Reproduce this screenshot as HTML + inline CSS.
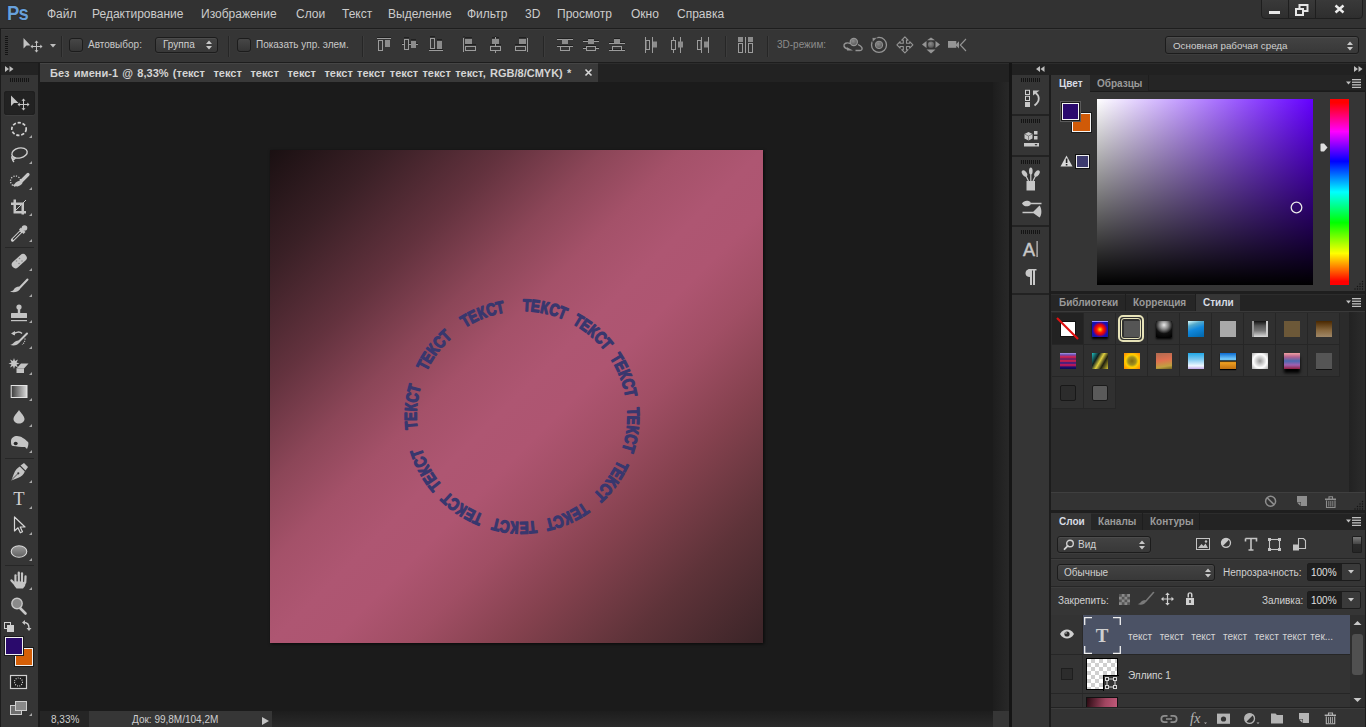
<!DOCTYPE html>
<html><head><meta charset="utf-8">
<style>
*{margin:0;padding:0;box-sizing:border-box}
html,body{width:1366px;height:727px;overflow:hidden;background:#1b1b1b;font-family:"Liberation Sans",sans-serif;position:relative}
.a{position:absolute}
.t{position:absolute;white-space:nowrap;color:#c8c8c8;font-size:10px;line-height:12px}
.m{position:absolute;white-space:nowrap;color:#cccccc;font-size:12px;line-height:14px;top:7px}
svg{position:absolute;overflow:visible}
.sep{position:absolute;top:36px;width:1px;height:21px;background:#262626;box-shadow:1px 0 0 #3c3c3c}
.chk{position:absolute;top:38px;width:14px;height:14px;border:1px solid #1c1c1c;border-radius:3px;background:linear-gradient(#474747,#353535);box-shadow:0 1px 0 #3c3c3c}
.dd{position:absolute;border:1px solid #1c1c1c;border-radius:3px;background:linear-gradient(#434343,#383838);box-shadow:inset 0 1px 0 #4c4c4c,0 1px 0 #3c3c3c}
</style></head><body>
<!-- MENU BAR -->
<div class="a" style="left:0;top:0;width:1366px;height:28px;background:#323232"></div>
<div class="a" style="left:0;top:28px;width:1366px;height:1px;background:#1e1e1e"></div>
<div class="a" style="left:7px;top:1.5px;font:bold 18.5px/20px 'Liberation Sans',sans-serif;color:#68a0da;letter-spacing:-0.8px;transform:scaleY(1.14);transform-origin:0 0;text-shadow:0 0 1px #151515">Ps</div>
<div class="m" style="left:47px">Файл</div>
<div class="m" style="left:92px">Редактирование</div>
<div class="m" style="left:201px">Изображение</div>
<div class="m" style="left:296px">Слои</div>
<div class="m" style="left:342px">Текст</div>
<div class="m" style="left:388px">Выделение</div>
<div class="m" style="left:467px">Фильтр</div>
<div class="m" style="left:525px">3D</div>
<div class="m" style="left:557px">Просмотр</div>
<div class="m" style="left:631px">Окно</div>
<div class="m" style="left:677px">Справка</div>
<!-- window controls -->
<div class="a" style="left:1261px;top:-2px;width:102px;height:21px;border:1px solid #1e1e1e;border-radius:0 0 4px 4px;background:linear-gradient(#3a3a3a,#2e2e2e)"></div>
<div class="a" style="left:1288px;top:0;width:1px;height:18px;background:#1e1e1e"></div>
<div class="a" style="left:1315px;top:0;width:1px;height:18px;background:#1e1e1e"></div>
<div class="a" style="left:1269px;top:11px;width:11px;height:3px;background:#e6e6e6"></div>
<svg style="left:1295px;top:4px" width="14" height="12"><rect x="4.5" y="1" width="8" height="6" fill="none" stroke="#e6e6e6" stroke-width="2"/><rect x="1" y="5" width="7" height="6" fill="#323232" stroke="#e6e6e6" stroke-width="2"/></svg>
<svg style="left:1334px;top:4px" width="11" height="10"><path d="M1.5 1.5L9.5 8.5M9.5 1.5L1.5 8.5" stroke="#ececec" stroke-width="2.4"/></svg>

<!-- OPTIONS BAR -->
<div class="a" style="left:0;top:29px;width:1366px;height:33px;background:#353535;box-shadow:inset 0 1px 0 #3c3c3c"></div>
<div class="a" style="left:0;top:62px;width:1366px;height:1px;background:#1d1d1d"></div>
<div class="a" style="left:0;top:29px;width:1px;height:33px;background:#1d1d1d"></div>
<div class="a" style="left:5px;top:36px;width:3px;height:20px;background:repeating-linear-gradient(#141414 0 1px,#353535 1px 2px)"></div>
<svg style="left:0;top:0" width="60" height="60"><path d="M23.5 38V48.5L26.5 45.5H30.5Z" fill="#c2c2c2"/>
<path d="M36.5 42v9M32 46.5h9" stroke="#c2c2c2" stroke-width="1"/>
<path d="M36.5 40.5l-2 2.2h4zM36.5 52.5l-2-2.2h4zM30.5 46.5l2.2-2v4zM42.5 46.5l-2.2-2v4z" fill="#c2c2c2"/></svg>
<svg style="left:50px;top:44px" width="6" height="4"><path d="M0 0h6L3 3.5Z" fill="#bdbdbd"/></svg>
<div class="sep" style="left:61px"></div>
<div class="chk" style="left:69px"></div>
<div class="t" style="left:88px;top:39px">Автовыбор:</div>
<div class="dd" style="left:155px;top:37px;width:63px;height:16px"></div>
<div class="t" style="left:163px;top:39px;color:#d0d0d0">Группа</div>
<svg style="left:206px;top:40px" width="6" height="10"><path d="M0 4L3 0.5L6 4ZM0 6L3 9.5L6 6Z" fill="#c8c8c8"/></svg>
<div class="sep" style="left:228px"></div>
<div class="chk" style="left:237px"></div>
<div class="t" style="left:256px;top:39px">Показать упр. элем.</div>
<div class="sep" style="left:362px"></div>
<!-- align icons -->
<svg style="left:0;top:0" width="770" height="60" fill="none" stroke="#9c9c9c" stroke-width="1">
<g stroke="#1c1c1c" opacity="0.8">
<path d="M377 37.5h14M378 38.5h5M385 38.5h5"/>
<path d="M404 37.5h5M411 39.5h5M402 43.5h2M409 43.5h2M416 43.5h2"/>
<path d="M430 36.5h5M437 39.5h5M429 49.5h14"/>
<path d="M465 37.5h7M465 44.5h11M463.5 36.5h1"/>
<path d="M492 37.5h7M490 44.5h11M495 36.5h1"/>
<path d="M519 37.5h7M515 44.5h11"/>
<path d="M557 38.5h16M557 45.5h16M562 38.5h6"/>
<path d="M583 40.5h5M594 40.5h5M583 47.5h3M596 47.5h3M588 38.5h6M586 45.5h10"/>
<path d="M614 38.5h6M609 42.5h16M609 49.5h16"/>
</g>
<path d="M377 38.5h14"/><rect x="378.5" y="40.5" width="4" height="10"/><rect x="385" y="40" width="5" height="7" fill="#8c8c8c" stroke="none"/>
<path d="M402 44.5h16"/><rect x="404.5" y="39.5" width="4" height="10" fill="#353535"/><rect x="411" y="41" width="5" height="7" fill="#8c8c8c" stroke="none"/>
<path d="M429 50.5h14"/><rect x="430.5" y="38.5" width="4" height="10"/><rect x="437" y="41" width="5" height="8" fill="#8c8c8c" stroke="none"/>
<path d="M463.5 38v14"/><rect x="465" y="39" width="7" height="5" fill="#8c8c8c" stroke="none"/><rect x="465.5" y="46.5" width="10" height="4"/>
<path d="M495.5 37v16"/><rect x="492" y="39" width="7" height="5" fill="#8c8c8c" stroke="none"/><rect x="490.5" y="46.5" width="10" height="4" fill="#353535"/>
<path d="M527.5 38v14"/><rect x="519" y="39" width="7" height="5" fill="#8c8c8c" stroke="none"/><rect x="515.5" y="46.5" width="10" height="4"/>
<path d="M557 39.5h16M557 46.5h16"/><rect x="562" y="39.5" width="6" height="4.5" fill="#8c8c8c" stroke="none"/><rect x="560.5" y="46.5" width="9" height="4"/>
<path d="M583 41.5h5M594 41.5h5M583 48.5h3M596 48.5h3"/><rect x="588" y="39" width="6" height="5" fill="#8c8c8c" stroke="none"/><rect x="586.5" y="46.5" width="9" height="4"/>
<path d="M609 43.5h16M609 50.5h16"/><rect x="614" y="39" width="6" height="4.5" fill="#8c8c8c" stroke="none"/><rect x="612.5" y="46.5" width="9" height="4"/>
<path d="M645.5 37v16M652.5 37v16"/><rect x="646" y="40.5" width="3.5" height="9"/><rect x="653" y="41.5" width="4" height="6" fill="#8c8c8c" stroke="none"/>
<path d="M673.5 37v16M680.5 37v16"/><rect x="671.5" y="40.5" width="4" height="9" fill="#353535"/><rect x="678" y="41.5" width="5" height="6" fill="#8c8c8c" stroke="none"/>
<path d="M701.5 37v16M708.5 37v16"/><rect x="697.5" y="40.5" width="3.5" height="9"/><rect x="704" y="41.5" width="4" height="6" fill="#8c8c8c" stroke="none"/>
<rect x="738" y="37" width="5" height="5" fill="#8c8c8c" stroke="none"/><rect x="748" y="37" width="5" height="5" fill="#8c8c8c" stroke="none"/>
<rect x="738.5" y="43.5" width="4" height="9"/><rect x="748.5" y="43.5" width="4" height="9"/><path d="M745.5 37v16"/>
</svg>
<div class="sep" style="left:543px"></div>
<div class="sep" style="left:725px"></div>
<div class="sep" style="left:767px"></div>
<div class="t" style="left:777px;top:39px;color:#8c8c8c">3D-режим:</div>
<svg style="left:0;top:0" width="980" height="60" fill="none" stroke="#959595" stroke-width="1.2">
<defs><radialGradient id="sph" cx="0.4" cy="0.35" r="0.7"><stop offset="0" stop-color="#8a8a8a"/><stop offset="1" stop-color="#555"/></radialGradient></defs>
<circle cx="853.8" cy="42" r="3.6" fill="url(#sph)"/>
<path d="M850.5 43.5c-4-1.5-7 0-6.5 2.5c0.3 1.5 2 2.5 4 3" stroke-width="1.4"/>
<path d="M847 47.2l6 3.3h-6Z" fill="#959595" stroke="none"/>
<path d="M855.5 50.5h4.5c2.5 0 3-2.5 0.5-4.5l-2.5-1.5" stroke-width="1.4"/>
<circle cx="879" cy="44.9" r="7.5" stroke-width="1.3"/>
<path d="M872 37.5l5.2 0.2-4.7 4.5Z" fill="#959595" stroke="#333" stroke-width="0.8"/>
<circle cx="879" cy="44.9" r="3.7" fill="url(#sph)" stroke-width="1"/>
<path d="M904.9 36.9 L908.1 40.1 L906.5 40.1 L906.5 43.3 L909.7 43.3 L909.7 41.7 L912.9 44.9 L909.7 48.1 L909.7 46.5 L906.5 46.5 L906.5 49.7 L908.1 49.7 L904.9 52.9 L901.7 49.7 L903.3 49.7 L903.3 46.5 L900.1 46.5 L900.1 48.1 L896.9 44.9 L900.1 41.7 L900.1 43.3 L903.3 43.3 L903.3 40.1 L901.7 40.1Z" stroke-width="1.1" stroke-linejoin="round"/>
<g fill="#959595" stroke="none"><path d="M931 37.5l4 2.8h-8Z"/><path d="M931 53.5l4.5-4h-9Z"/><path d="M922 44.5l4.5-3.5v7Z"/><path d="M940 44.5l-4.5-3.5v7Z"/></g>
<circle cx="931" cy="44.7" r="3.1" fill="url(#sph)" stroke="none"/>
<rect x="948" y="41" width="8.3" height="6.8" fill="#959595" stroke="none"/><path d="M956 44.3l3-3v7.3l-3-3Z" fill="#959595" stroke="none"/>
<path d="M966 39l-5.7 6 5.7 6" stroke-width="1.1"/>
</svg>
<div class="dd" style="left:1165px;top:36px;width:194px;height:18px"></div>
<div class="t" style="left:1173px;top:40px;color:#d0d0d0;font-size:9.8px">Основная рабочая среда</div>
<svg style="left:1347px;top:41px" width="6" height="10"><path d="M0 4L3 0.5L6 4ZM0 6L3 9.5L6 6Z" fill="#c8c8c8"/></svg>

<!-- LEFT TOOLBAR -->
<div class="a" style="left:0;top:63px;width:40px;height:664px;background:#1c1c1c"></div>
<div class="a" style="left:1px;top:63px;width:37px;height:12px;background:#232323"></div>
<svg style="left:5px;top:66px" width="9" height="6" fill="#bdbdbd"><path d="M0 0L4 3L0 6ZM4.5 0L8.5 3L4.5 6Z"/></svg>
<div class="a" style="left:1px;top:75px;width:37px;height:652px;background:#353535"></div>
<div class="a" style="left:10px;top:78px;width:19px;height:4px;background:repeating-linear-gradient(90deg,#141414 0 1px,#353535 1px 2px)"></div>
<div class="a" style="left:4px;top:91px;width:31px;height:24px;background:#222;border-radius:3px;box-shadow:inset 0 0 0 1px #1f1f1f, 0 1px 0 #3e3e3e"></div>
<svg style="left:0;top:0" width="40" height="727">
<g fill="#c4c4c4" stroke="none">
<!-- move -->
<path d="M11 95.5V106L14 103H18.5Z"/>
<path d="M23.5 100v9M19 104.5h9" stroke="#c4c4c4" stroke-width="1"/>
<path d="M23.5 98.5l-2 2.2h4zM23.5 110.5l-2-2.2h4zM17.5 104.5l2.2-2v4zM29.5 104.5l-2.2-2v4z"/>
<!-- marquee -->
<ellipse cx="19" cy="129" rx="7.2" ry="6.3" fill="none" stroke="#d4d4d4" stroke-width="1.7" stroke-dasharray="3.2 1.8"/>
<!-- lasso -->
<ellipse cx="19.5" cy="153" rx="7.8" ry="5" transform="rotate(-12 19.5 153)" fill="none" stroke="#d0d0d0" stroke-width="1.4"/>
<path d="M12 156c-1 3 1 4 2.5 3s0 -2 -1.5 -1c-1 1 0 3 1 4" fill="none" stroke="#d0d0d0" stroke-width="1.3"/>
<!-- quick select -->
<circle cx="15.5" cy="181" r="5" fill="none" stroke="#d0d0d0" stroke-width="1.3" stroke-dasharray="1.2 1.4"/>
<path d="M28 174.5L21 181.5" stroke="#c8c8c8" stroke-width="3.2" stroke-linecap="round"/><path d="M21.5 180.5c-3 0 -5.5 1.5 -7 3.5c-0.5 0.7 -1.5 1 -2.5 1.2c3.5 2 8.5 1.5 10.5-2.2Z"/>
<!-- crop -->
<path d="M13.5 199.5h2.5v11.5h10v2.5h-12.5ZM11 202.5h13v12h-2.5v-9.5h-10.5Z"/>
<path d="M16 210L26 200" stroke="#c4c4c4" stroke-width="1"/>
<!-- eyedropper -->
<path d="M12.5 240L21 231.5" stroke="#cfcfcf" stroke-width="3.2" stroke-linecap="round"/>
<path d="M13 239.5L20.5 232" stroke="#333" stroke-width="1.4"/>
<path d="M19 229.5L23.5 234l2-2l-4.5-4.5Z"/>
<circle cx="24.5" cy="228" r="2.8"/>
<!-- separator -->
<!-- healing -->
<rect x="10.5" y="257.5" width="17.5" height="7.5" rx="3.7" transform="rotate(-42 19.2 261.2)"/>
<g fill="#8a8a8a"><circle cx="16.5" cy="261" r="0.8"/><circle cx="19.5" cy="258.5" r="0.8"/><circle cx="19" cy="263.5" r="0.8"/><circle cx="22" cy="261" r="0.8"/></g>
<!-- brush -->
<path d="M27.5 279.5L19 288.5" stroke="#c8c8c8" stroke-width="2" stroke-linecap="round"/>
<path d="M19.5 286.5c-3 0 -5 1.5 -6 3.5c-1 1 -2.5 1.3 -3.5 1.5c3 1.5 8 1 10-2.5Z"/>
<!-- stamp -->
<circle cx="19" cy="307" r="2.6"/><rect x="17.8" y="308" width="2.4" height="5"/>
<rect x="11" y="313" width="16" height="5" rx="0.5"/><rect x="11" y="320" width="16" height="1.2"/>
<!-- history brush -->
<path d="M13 334.5c3-3 7-3 9-1" fill="none" stroke="#c8c8c8" stroke-width="1.5"/><path d="M11 333.5l4-2.5v4.5Z"/>
<path d="M27 333.5L18.5 342" stroke="#c8c8c8" stroke-width="2" stroke-linecap="round"/>
<path d="M19 340.5c-3 0 -5 1.5 -6 3c-1 1 -2 1.2 -3 1.3c3 1.5 7.5 1 9.5-2.5Z"/>
<path d="M25 338.5c0 3 -1 5 -3 6" fill="none" stroke="#d8d8d8" stroke-width="1.1" stroke-dasharray="1 1.2"/>
<!-- eraser -->
<path d="M14 358l1 3 3-1.5-1.5 3 3 1-3 1 1.5 3-3-1.5-1 3-1-3-3 1.5 1.5-3-3-1 3-1-1.5-3 3 1.5Z"/>
<path d="M16.5 368.5L21 363.5h7.5l-4.5 5v4.5h-7.5Z"/><path d="M24 368.5h-7.5" stroke="#888" stroke-width="0.6"/>
<!-- gradient -->
<defs><linearGradient id="gg"><stop offset="0" stop-color="#3a3a3a"/><stop offset="1" stop-color="#dcdcdc"/></linearGradient>
<linearGradient id="el" x1="0" y1="0" x2="0" y2="1"><stop offset="0" stop-color="#9a9a9a"/><stop offset="1" stop-color="#606060"/></linearGradient></defs>
<rect x="11.2" y="385.5" width="15.8" height="12" fill="url(#gg)" stroke="#e4e4e4" stroke-width="1"/>
<!-- blur -->
<path d="M19 410c-2 3 -5.5 6 -5.5 9c0 2.5 2.5 4.5 5.5 4.5s5.5-2 5.5-4.5c0-3 -3.5-6 -5.5-9Z"/>
<!-- dodge -->
<path d="M11 441c0-3 3-5 6-5c4 0 8 3 11 6c1 1 0 5 -1 7l-2 -2c-4 0 -9 -0.5 -12 -1c-2 0 -2 -3 -2 -5Z"/>
<ellipse cx="15.7" cy="443.5" rx="2" ry="1.8" fill="#2a2a2a"/>
<!-- pen -->
<path d="M20.5 465.5l3.5 -2.5 4 4 -2.5 3.5Z"/>
<path d="M19.8 466.5l5 5c-1 3 -3 5 -7 6.5l-6.5 2.5 2.5-6.5c1.5-4 3.5-6 6-7.5Z"/>
<path d="M11.5 480l6-6" stroke="#333" stroke-width="0.8"/><circle cx="18.3" cy="473.3" r="1.1" fill="#333"/>
<!-- type -->
<text x="19" y="505" font-family="Liberation Serif" font-size="18.5" text-anchor="middle" fill="#d0d0d0">T</text>
<!-- path select -->
<path d="M14.5 517v14l3.5-3.2 2.3 5 2.2-1-2.3-4.8h4.8Z" fill="none" stroke="#d6d6d6" stroke-width="1.2" stroke-linejoin="round"/>
<!-- ellipse -->
<ellipse cx="19" cy="551.5" rx="7.8" ry="5.8" fill="url(#el)" stroke="#d8d8d8" stroke-width="1.1"/>
<!-- hand -->
<path d="M14.5 581.5h11.5l-1 4.5-2 2.5h-6.5l-2-2.5Z"/><path d="M15.5 582v-6.5M18.8 582v-9.3M22 582v-8.5M25.2 582.5l0.3-6" stroke="#c4c4c4" stroke-width="2.3" stroke-linecap="round"/><path d="M16 585.5l-4.5-5" stroke="#c4c4c4" stroke-width="2.4" stroke-linecap="round"/><path d="M17.2 576v5M20.4 574v7M23.6 575v7" stroke="#353535" stroke-width="0.8"/>
<!-- zoom -->
<path d="M20 608L25.5 613.5" stroke="#c8c8c8" stroke-width="2.6" stroke-linecap="round"/>
<circle cx="17" cy="603.5" r="5.2" fill="#8a8a8a" stroke="#c8c8c8" stroke-width="1.4"/>
<!-- default colors -->
<rect x="4.5" y="622.5" width="6" height="6" fill="#333" stroke="#cfcfcf" stroke-width="1"/>
<rect x="7" y="625" width="7" height="7" fill="#cfcfcf"/>
<rect x="4.5" y="622.5" width="6" height="6" fill="none" stroke="#cfcfcf" stroke-width="1"/>
<rect x="5" y="623" width="5" height="2" fill="#333"/><rect x="5" y="623" width="2" height="5" fill="#333"/>
<!-- swap -->
<path d="M24 622.5c3 0 5 1.5 5 5.5" fill="none" stroke="#cfcfcf" stroke-width="1.3"/>
<path d="M22 622.5l3-2.5v5Z M29 631l-2.5-3h5Z"/>
<!-- small triangles -->
<g fill="#a8a8a8">
<path d="M32 135v3h-3Z"/><path d="M32 161v3h-3Z"/><path d="M32 187v3h-3Z"/><path d="M32 213v3h-3Z"/><path d="M32 239v3h-3Z"/>
<path d="M32 268v3h-3Z"/><path d="M32 294v3h-3Z"/><path d="M32 320v3h-3Z"/><path d="M32 346v3h-3Z"/><path d="M32 372v3h-3Z"/><path d="M32 398v3h-3Z"/><path d="M32 424v3h-3Z"/><path d="M32 450v3h-3Z"/>
<path d="M32 480v3h-3Z"/><path d="M32 506v3h-3Z"/><path d="M32 532v3h-3Z"/><path d="M32 558v3h-3Z"/>
<path d="M32 587v3h-3Z"/><path d="M32 713v3h-3Z"/>
</g>
</g>
<!-- separators -->
<rect x="5" y="247" width="29" height="1" fill="#262626"/>
<rect x="5" y="458" width="29" height="1" fill="#262626"/>
<rect x="5" y="565" width="29" height="1" fill="#262626"/>
<!-- fg/bg -->
<rect x="15.5" y="648.5" width="17" height="17" fill="#d45f08" stroke="#f0f0f0" stroke-width="1"/>
<rect x="14.5" y="647.5" width="19" height="19" fill="none" stroke="#1a1a1a" stroke-width="1"/>
<rect x="5.5" y="637.5" width="17" height="17" fill="#2a0a6c" stroke="#f0f0f0" stroke-width="1"/>
<rect x="4.5" y="636.5" width="19" height="19" fill="none" stroke="#1a1a1a" stroke-width="1"/>
<!-- quick mask -->
<rect x="10.5" y="675.5" width="16" height="13" fill="#202020" stroke="#d0d0d0" stroke-width="1.2"/>
<circle cx="18.5" cy="682" r="4" fill="none" stroke="#e0e0e0" stroke-width="1.1" stroke-dasharray="0.9 1.3"/>
<!-- screen mode -->
<rect x="10.5" y="705.5" width="11" height="9" fill="#6e6e6e" stroke="#cfcfcf" stroke-width="1"/>
<rect x="15.5" y="701.5" width="11" height="9" fill="#8a8a8a" stroke="#cfcfcf" stroke-width="1"/>
</svg>


<!-- DOC TAB BAR -->
<div class="a" style="left:40px;top:63px;width:969px;height:19px;background:#222222;box-shadow:inset 0 1px 0 #2c2c2c"></div>
<div class="a" style="left:40px;top:63px;width:558px;height:19px;background:#393939;box-shadow:inset 0 1px 0 #454545"></div>
<div class="a" style="left:50px;top:66px;font:bold 11px/14px 'Liberation Sans',sans-serif;color:#d4d4d4;white-space:pre;word-spacing:1.25px">Без имени-1 @ 8,33% (текст  текст  текст  текст  текст текст текст текст текст, RGB/8/CMYK) *</div>
<svg style="left:585px;top:69px" width="7" height="7"><path d="M0.5 0.5L6.5 6.5M6.5 0.5L0.5 6.5" stroke="#d8d8d8" stroke-width="1.6"/></svg>

<!-- DOCUMENT AREA -->
<div class="a" style="left:40px;top:82px;width:953px;height:629px;background:#1b1b1b"></div>
<div class="a" id="canvas" style="left:270px;top:150px;width:493px;height:493px;box-shadow:1px 1px 3px rgba(0,0,0,.7);background:linear-gradient(135deg,#1a1012 0%,#3a2026 12%,#63323e 24%,#8c4658 34%,#a45169 42%,#ae5672 50%,#ae5571 56%,#a04e64 64%,#84414e 74%,#5e3339 86%,#3a2427 100%)"></div>
<svg id="ring" style="left:270px;top:150px" width="493" height="493"><g fill="#38376e" stroke="#38376e" stroke-width="1.3" stroke-linejoin="round" font-family="Liberation Sans" font-weight="bold" font-size="17" text-anchor="middle"><text transform="translate(252,266.5) rotate(2.49) translate(0,-105.5) scale(0.8,1)">Т</text><text transform="translate(252,266.5) rotate(6.95) translate(0,-105.5) scale(0.8,1)">Е</text><text transform="translate(252,266.5) rotate(11.81) translate(0,-105.5) scale(0.8,1)">К</text><text transform="translate(252,266.5) rotate(16.85) translate(0,-105.5) scale(0.8,1)">С</text><text transform="translate(252,266.5) rotate(21.51) translate(0,-105.5) scale(0.8,1)">Т</text><text transform="translate(252,266.5) rotate(30.49) translate(0,-105.5) scale(0.8,1)">Т</text><text transform="translate(252,266.5) rotate(34.95) translate(0,-105.5) scale(0.8,1)">Е</text><text transform="translate(252,266.5) rotate(39.81) translate(0,-105.5) scale(0.8,1)">К</text><text transform="translate(252,266.5) rotate(44.85) translate(0,-105.5) scale(0.8,1)">С</text><text transform="translate(252,266.5) rotate(49.51) translate(0,-105.5) scale(0.8,1)">Т</text><text transform="translate(252,266.5) rotate(58.49) translate(0,-105.5) scale(0.8,1)">Т</text><text transform="translate(252,266.5) rotate(62.95) translate(0,-105.5) scale(0.8,1)">Е</text><text transform="translate(252,266.5) rotate(67.81) translate(0,-105.5) scale(0.8,1)">К</text><text transform="translate(252,266.5) rotate(72.85) translate(0,-105.5) scale(0.8,1)">С</text><text transform="translate(252,266.5) rotate(77.51) translate(0,-105.5) scale(0.8,1)">Т</text><text transform="translate(252,266.5) rotate(87.49) translate(0,-105.5) scale(0.8,1)">Т</text><text transform="translate(252,266.5) rotate(91.95) translate(0,-105.5) scale(0.8,1)">Е</text><text transform="translate(252,266.5) rotate(96.81) translate(0,-105.5) scale(0.8,1)">К</text><text transform="translate(252,266.5) rotate(101.85) translate(0,-105.5) scale(0.8,1)">С</text><text transform="translate(252,266.5) rotate(106.51) translate(0,-105.5) scale(0.8,1)">Т</text><text transform="translate(252,266.5) rotate(116.49) translate(0,-105.5) scale(0.8,1)">Т</text><text transform="translate(252,266.5) rotate(120.95) translate(0,-105.5) scale(0.8,1)">Е</text><text transform="translate(252,266.5) rotate(125.81) translate(0,-105.5) scale(0.8,1)">К</text><text transform="translate(252,266.5) rotate(130.85) translate(0,-105.5) scale(0.8,1)">С</text><text transform="translate(252,266.5) rotate(135.51) translate(0,-105.5) scale(0.8,1)">Т</text><text transform="translate(252,266.5) rotate(146.49) translate(0,-105.5) scale(0.8,1)">Т</text><text transform="translate(252,266.5) rotate(150.95) translate(0,-105.5) scale(0.8,1)">Е</text><text transform="translate(252,266.5) rotate(155.81) translate(0,-105.5) scale(0.8,1)">К</text><text transform="translate(252,266.5) rotate(160.85) translate(0,-105.5) scale(0.8,1)">С</text><text transform="translate(252,266.5) rotate(165.51) translate(0,-105.5) scale(0.8,1)">Т</text><text transform="translate(252,266.5) rotate(174.49) translate(0,-105.5) scale(0.8,1)">Т</text><text transform="translate(252,266.5) rotate(178.95) translate(0,-105.5) scale(0.8,1)">Е</text><text transform="translate(252,266.5) rotate(183.81) translate(0,-105.5) scale(0.8,1)">К</text><text transform="translate(252,266.5) rotate(188.85) translate(0,-105.5) scale(0.8,1)">С</text><text transform="translate(252,266.5) rotate(193.51) translate(0,-105.5) scale(0.8,1)">Т</text><text transform="translate(252,266.5) rotate(203.49) translate(0,-105.5) scale(0.8,1)">Т</text><text transform="translate(252,266.5) rotate(207.95) translate(0,-105.5) scale(0.8,1)">Е</text><text transform="translate(252,266.5) rotate(212.81) translate(0,-105.5) scale(0.8,1)">К</text><text transform="translate(252,266.5) rotate(217.85) translate(0,-105.5) scale(0.8,1)">С</text><text transform="translate(252,266.5) rotate(222.51) translate(0,-105.5) scale(0.8,1)">Т</text><text transform="translate(252,266.5) rotate(231.49) translate(0,-105.5) scale(0.8,1)">Т</text><text transform="translate(252,266.5) rotate(235.95) translate(0,-105.5) scale(0.8,1)">Е</text><text transform="translate(252,266.5) rotate(240.81) translate(0,-105.5) scale(0.8,1)">К</text><text transform="translate(252,266.5) rotate(245.85) translate(0,-105.5) scale(0.8,1)">С</text><text transform="translate(252,266.5) rotate(250.51) translate(0,-105.5) scale(0.8,1)">Т</text><text transform="translate(252,266.5) rotate(265.49) translate(0,-105.5) scale(0.8,1)">Т</text><text transform="translate(252,266.5) rotate(269.95) translate(0,-105.5) scale(0.8,1)">Е</text><text transform="translate(252,266.5) rotate(274.81) translate(0,-105.5) scale(0.8,1)">К</text><text transform="translate(252,266.5) rotate(279.85) translate(0,-105.5) scale(0.8,1)">С</text><text transform="translate(252,266.5) rotate(284.51) translate(0,-105.5) scale(0.8,1)">Т</text><text transform="translate(252,266.5) rotate(297.49) translate(0,-105.5) scale(0.8,1)">Т</text><text transform="translate(252,266.5) rotate(301.95) translate(0,-105.5) scale(0.8,1)">Е</text><text transform="translate(252,266.5) rotate(306.81) translate(0,-105.5) scale(0.8,1)">К</text><text transform="translate(252,266.5) rotate(311.85) translate(0,-105.5) scale(0.8,1)">С</text><text transform="translate(252,266.5) rotate(316.51) translate(0,-105.5) scale(0.8,1)">Т</text><text transform="translate(252,266.5) rotate(329.49) translate(0,-105.5) scale(0.8,1)">Т</text><text transform="translate(252,266.5) rotate(333.95) translate(0,-105.5) scale(0.8,1)">Е</text><text transform="translate(252,266.5) rotate(338.81) translate(0,-105.5) scale(0.8,1)">К</text><text transform="translate(252,266.5) rotate(343.85) translate(0,-105.5) scale(0.8,1)">С</text><text transform="translate(252,266.5) rotate(348.51) translate(0,-105.5) scale(0.8,1)">Т</text></g></svg>
<!-- scrollbars / status -->
<div class="a" style="left:993px;top:82px;width:16px;height:629px;background:linear-gradient(90deg,#1d1d1d,#282828)"></div>
<div class="a" style="left:272px;top:711px;width:721px;height:16px;background:linear-gradient(#1d1d1d,#2a2a2a)"></div>
<div class="a" style="left:993px;top:711px;width:16px;height:16px;background:#363636"></div>
<div class="a" style="left:40px;top:711px;width:49px;height:16px;background:#252525"></div>
<div class="a" style="left:89px;top:711px;width:183px;height:16px;background:#363636"></div>
<div class="t" style="left:51px;top:714px;color:#cfcfcf">8,33%</div>
<div class="t" style="left:132px;top:714px;color:#cfcfcf">Док: 99,8M/104,2M</div>
<svg style="left:262px;top:717px" width="7" height="8"><path d="M0 0L7 4L0 8Z" fill="#c4c4c4"/></svg>

<!-- PANEL DOCK -->
<div class="a" style="left:1009px;top:63px;width:3px;height:664px;background:#151515"></div>
<div class="a" style="left:1012px;top:63px;width:354px;height:12px;background:#212121;box-shadow:inset 0 1px 0 #2c2c2c"></div>
<!-- header arrows -->
<svg style="left:1036px;top:66px" width="9" height="6" fill="#bdbdbd"><path d="M4 0L0 3L4 6ZM8.5 0L4.5 3L8.5 6Z"/></svg>
<svg style="left:1354px;top:66px" width="9" height="6" fill="#bdbdbd"><path d="M0 0L4 3L0 6ZM4.5 0L8.5 3L4.5 6Z"/></svg>
<!-- STRIP -->
<div class="a" style="left:1012px;top:75px;width:37px;height:652px;background:#353535"></div>
<div class="a" style="left:1012px;top:114px;width:37px;height:2px;background:#222"></div>
<div class="a" style="left:1012px;top:155px;width:37px;height:2px;background:#222"></div>
<div class="a" style="left:1012px;top:225px;width:37px;height:2px;background:#222"></div>
<div class="a" style="left:1012px;top:293px;width:37px;height:2px;background:#222"></div>
<div class="a" style="left:1021px;top:78px;width:19px;height:4px;background:repeating-linear-gradient(90deg,#141414 0 1px,#353535 1px 2px)"></div>
<div class="a" style="left:1021px;top:119px;width:19px;height:4px;background:repeating-linear-gradient(90deg,#141414 0 1px,#353535 1px 2px)"></div>
<div class="a" style="left:1021px;top:160px;width:19px;height:4px;background:repeating-linear-gradient(90deg,#141414 0 1px,#353535 1px 2px)"></div>
<div class="a" style="left:1021px;top:230px;width:19px;height:4px;background:repeating-linear-gradient(90deg,#141414 0 1px,#353535 1px 2px)"></div>
<svg style="left:1011px;top:75px" width="38" height="220">
<g fill="#c8c8c8">
<!-- history -->
<rect x="14.5" y="15.3" width="4" height="4.2" fill="none" stroke="#d0d0d0"/><rect x="14.5" y="21.3" width="4" height="4.2" fill="none" stroke="#d0d0d0"/><rect x="14" y="27" width="5" height="5"/>
<path d="M22 15.5h6.5l-6.5 5Z"/>
<path d="M24.5 18c4 2.5 5 8 -1 12.5" fill="none" stroke="#c8c8c8" stroke-width="1.8"/>
<!-- 3d/props -->
<g transform="translate(2,3)"><path d="M15.5 54l4 2v4.5l-4 2-4-2v-4.5Z" fill="#c8c8c8"/><path d="M11.5 56l4 2 4-2M15.5 58v4.5" stroke="#555" stroke-width="0.6" fill="none"/>
<rect x="21" y="53" width="3.5" height="3.5"/><rect x="21" y="58" width="3.5" height="3.5"/>
<rect x="11" y="65" width="15" height="3.5"/><path d="M21.5 66h3l-1.5 1.8Z" fill="#333"/></g>
<!-- brushes -->
<path d="M15.5 106h8.5v9.5h-8.5Z"/><path d="M17.5 106L14.5 100M19.8 106V97M22 106L25 100" stroke="#c8c8c8" stroke-width="1.2"/>
<ellipse cx="13.5" cy="98.5" rx="2.2" ry="3.6" transform="rotate(-35 13.5 98.5)"/><ellipse cx="19.8" cy="96" rx="1.8" ry="3.5"/><ellipse cx="26" cy="98.5" rx="2.2" ry="3.6" transform="rotate(35 26 98.5)"/>
<!-- brush presets -->
<path d="M19 128.5h11.5M11.5 137.5h11" stroke="#c8c8c8" stroke-width="1.7"/>
<path d="M11 128.5c2-3.5 6-3.5 8.5-1.5v3c-2.5 2-6.5 2-8.5-1.5Z"/><path d="M21.5 137.5L28.5 130.5c2.5 3 2.5 9.5 0 12Z"/>
<!-- character -->
<text x="12" y="181.3" font-family="Liberation Sans" font-size="18" fill="#c8c8c8" stroke="#c8c8c8" stroke-width="0.5">A</text><rect x="25.5" y="166" width="1.2" height="16"/>
<!-- paragraph -->
<path d="M17 194h8.5v1.5h-1.5v14.5h-2v-14.5h-1v14.5h-2v-8c-3 0 -4.5-1.5-4.5-3.8s1.5-3.7 3-3.7Z"/>
</g></svg>
<!-- sep between strip and panels -->
<div class="a" style="left:1049px;top:75px;width:2px;height:652px;background:#1c1c1c"></div>
<div class="a" style="left:1365px;top:75px;width:1px;height:652px;background:#1c1c1c"></div>

<!-- COLOR PANEL -->
<div class="a" style="left:1051px;top:75px;width:314px;height:16px;background:#252525;box-shadow:inset 0 -1px 0 #1e1e1e"></div>
<div class="a" style="left:1051px;top:75px;width:39px;height:17px;background:#353535"></div>
<div class="a" style="left:1090px;top:75px;width:59px;height:16px;background:#262626;border-right:1px solid #1e1e1e"></div>
<div class="t" style="left:1059px;top:78px;font-weight:bold;font-size:10px;color:#d8dce4">Цвет</div>
<div class="t" style="left:1097px;top:78px;font-weight:bold;font-size:10px;color:#9a9a9a">Образцы</div>
<svg style="left:1346px;top:79px" width="16" height="9" fill="#c0c0c0"><path d="M0 2.5h5L2.5 5.5Z"/><rect x="6" y="0" width="9" height="1.3"/><rect x="6" y="2.6" width="9" height="1.3"/><rect x="6" y="5.2" width="9" height="1.3"/><rect x="6" y="7.8" width="9" height="1.2"/></svg>
<div class="a" style="left:1051px;top:92px;width:314px;height:199px;background:#353535"></div>
<!-- fg/bg -->
<div class="a" style="left:1072px;top:113px;width:19px;height:19px;background:#d05a08;border:1px solid #f4f4f4;box-shadow:0 0 0 1px #1a1a1a"></div>
<div class="a" style="left:1060px;top:101px;width:21px;height:21px;background:#1a1a1a;border:1px solid #5a5a5a"></div>
<div class="a" style="left:1062px;top:103px;width:17px;height:17px;background:#2b0a6e;border:1px solid #f4f4f4"></div>
<svg style="left:1060px;top:155px" width="13" height="12"><path d="M6.5 0.5L12.5 11.5H0.5Z" fill="#d8d8d8"/><rect x="5.8" y="3.5" width="1.6" height="4.5" fill="#222"/><rect x="5.8" y="9" width="1.6" height="1.5" fill="#222"/></svg>
<div class="a" style="left:1076px;top:155px;width:13px;height:13px;background:#3d3b6e;border:1px solid #f0f0f0;box-shadow:0 0 0 1px #111"></div>
<!-- field -->
<div class="a" style="left:1097px;top:99px;width:216px;height:186px;background:linear-gradient(to top,#000,rgba(0,0,0,0)),linear-gradient(to right,#fff,#6400ff)"></div>
<svg style="left:1290px;top:201px" width="13" height="13"><circle cx="6.5" cy="6.5" r="5.3" fill="none" stroke="#e8e8e8" stroke-width="1.3"/></svg>
<div class="a" style="left:1330px;top:99px;width:19px;height:186px;background:linear-gradient(#f00 0%,#f00 2%,#f0f 17.5%,#00f 33.5%,#0ff 50%,#0f0 66.5%,#ff0 83%,#f00 98%,#f00 100%)"></div>
<svg style="left:1320px;top:143px" width="8" height="9"><path d="M1.5 0.5h2.5L7.5 4.5L4 8.5H1.5Q0.5 8.5 0.5 7.5V1.5Q0.5 0.5 1.5 0.5Z" fill="#e0e0e0"/></svg>
<svg style="left:1354px;top:280px" width="10" height="10" fill="#141414"><circle cx="8.5" cy="1.5" r="0.7"/><circle cx="8.5" cy="4" r="0.7"/><circle cx="6" cy="4" r="0.7"/><circle cx="8.5" cy="6.5" r="0.7"/><circle cx="6" cy="6.5" r="0.7"/><circle cx="3.5" cy="6.5" r="0.7"/><circle cx="8.5" cy="9" r="0.7"/><circle cx="6" cy="9" r="0.7"/><circle cx="3.5" cy="9" r="0.7"/><circle cx="1" cy="9" r="0.7"/></svg>
<div class="a" style="left:1051px;top:291px;width:314px;height:3px;background:#1e1e1e"></div>

<!-- STYLES PANEL -->
<div class="a" style="left:1051px;top:294px;width:314px;height:17px;background:#232323;box-shadow:inset 0 1px 0 #2c2c2c"></div>
<div class="a" style="left:1051px;top:294px;width:75px;height:17px;background:#262626;border-right:1px solid #1e1e1e;box-shadow:inset 0 1px 0 #2e2e2e"></div>
<div class="a" style="left:1126px;top:294px;width:70px;height:17px;background:#262626;border-right:1px solid #1e1e1e;box-shadow:inset 0 1px 0 #2e2e2e"></div>
<div class="a" style="left:1196px;top:294px;width:44px;height:18px;background:#353535"></div>
<div class="t" style="left:1059px;top:297px;font-weight:bold;font-size:10px;color:#9a9a9a">Библиотеки</div>
<div class="t" style="left:1133px;top:297px;font-weight:bold;font-size:10px;color:#9a9a9a">Коррекция</div>
<div class="t" style="left:1203px;top:297px;font-weight:bold;font-size:10px;color:#d8dce4">Стили</div>
<svg style="left:1346px;top:298px" width="16" height="9" fill="#c0c0c0"><path d="M0 2.5h5L2.5 5.5Z"/><rect x="6" y="0" width="9" height="1.3"/><rect x="6" y="2.6" width="9" height="1.3"/><rect x="6" y="5.2" width="9" height="1.3"/><rect x="6" y="7.8" width="9" height="1.2"/></svg>
<div class="a" style="left:1051px;top:311px;width:314px;height:181px;background:#2b2b2b;box-shadow:inset 0 1px 0 #3a3a3a"></div>
<div class="a" style="left:1349px;top:312px;width:16px;height:180px;background:linear-gradient(90deg,#222,#2c2c2c)"></div>
<div class="a" style="left:1052px;top:313px;width:32px;height:32px;background:#222;border-right:1px solid #262626;border-bottom:1px solid #262626"></div>
<div class="a" style="left:1060px;top:321px;width:16px;height:16px;background:#fff;border:1px solid #111"></div>
<div class="a" style="left:1084px;top:313px;width:32px;height:32px;background:#303030;border-right:1px solid #262626;border-bottom:1px solid #262626"></div>
<div class="a" style="left:1092px;top:321px;width:16px;height:16px;background:radial-gradient(circle at 50% 50%,#ffe000 0,#ff2000 28%,#e00010 45%,#1010c0 70%,#1a1a8a);box-shadow:0 2px 2px #000;border-top:1px solid #9090ff"></div>
<div class="a" style="left:1116px;top:313px;width:32px;height:32px;background:#303030;border-right:1px solid #262626;border-bottom:1px solid #262626"></div>
<div class="a" style="left:1124px;top:321px;width:16px;height:16px;background:#555"></div>
<div class="a" style="left:1148px;top:313px;width:32px;height:32px;background:#303030;border-right:1px solid #262626;border-bottom:1px solid #262626"></div>
<div class="a" style="left:1156px;top:321px;width:16px;height:16px;background:radial-gradient(circle at 50% 25%,#e8e8e8 0,#888 30%,#111 60%,#000);box-shadow:0 2px 2px #000"></div>
<div class="a" style="left:1180px;top:313px;width:32px;height:32px;background:#303030;border-right:1px solid #262626;border-bottom:1px solid #262626"></div>
<div class="a" style="left:1188px;top:321px;width:16px;height:16px;background:linear-gradient(160deg,#dff 0,#5ac 25%,#18d 50%,#06a 100%)"></div>
<div class="a" style="left:1212px;top:313px;width:32px;height:32px;background:#303030;border-right:1px solid #262626;border-bottom:1px solid #262626"></div>
<div class="a" style="left:1220px;top:321px;width:16px;height:16px;background:#a9a9a9"></div>
<div class="a" style="left:1244px;top:313px;width:32px;height:32px;background:#303030;border-right:1px solid #262626;border-bottom:1px solid #262626"></div>
<div class="a" style="left:1252px;top:321px;width:16px;height:16px;background:linear-gradient(#111 0,#555 30%,#777 60%,#ddd 100%);border-left:2px solid #999;border-right:2px solid #ccc"></div>
<div class="a" style="left:1276px;top:313px;width:32px;height:32px;background:#303030;border-right:1px solid #262626;border-bottom:1px solid #262626"></div>
<div class="a" style="left:1284px;top:321px;width:16px;height:16px;background:#6c5838"></div>
<div class="a" style="left:1308px;top:313px;width:32px;height:32px;background:#303030;border-right:1px solid #262626;border-bottom:1px solid #262626"></div>
<div class="a" style="left:1316px;top:321px;width:16px;height:16px;background:linear-gradient(#4a2800,#8a6a40 60%,#a08868)"></div>
<div class="a" style="left:1052px;top:345px;width:32px;height:32px;background:#303030;border-right:1px solid #262626;border-bottom:1px solid #262626"></div>
<div class="a" style="left:1060px;top:353px;width:16px;height:16px;background:linear-gradient(#a89ae8 0,#6a4ab0 12%,#e02048 25%,#5a2070 38%,#e82040 50%,#20208a 62%,#e01850 75%,#1a1070 88%,#0a0a50 100%)"></div>
<div class="a" style="left:1084px;top:345px;width:32px;height:32px;background:#303030;border-right:1px solid #262626;border-bottom:1px solid #262626"></div>
<div class="a" style="left:1092px;top:353px;width:16px;height:16px;background:linear-gradient(120deg,#20c0c0 0,#102020 30%,#e0d040 50%,#202010 70%,#d0c030 100%)"></div>
<div class="a" style="left:1116px;top:345px;width:32px;height:32px;background:#303030;border-right:1px solid #262626;border-bottom:1px solid #262626"></div>
<div class="a" style="left:1124px;top:353px;width:16px;height:16px;background:radial-gradient(#806a10 0,#a09020 35%,#ffd000 55%,#ff8000 100%)"></div>
<div class="a" style="left:1148px;top:345px;width:32px;height:32px;background:#303030;border-right:1px solid #262626;border-bottom:1px solid #262626"></div>
<div class="a" style="left:1156px;top:353px;width:16px;height:16px;background:linear-gradient(170deg,#b06a50 0,#e07050 45%,#c0a040 80%,#706020 100%)"></div>
<div class="a" style="left:1180px;top:345px;width:32px;height:32px;background:#303030;border-right:1px solid #262626;border-bottom:1px solid #262626"></div>
<div class="a" style="left:1188px;top:353px;width:16px;height:16px;background:linear-gradient(#20a8e8 0,#7cc8f0 40%,#f0f8ff 80%,#c0a8e8 100%)"></div>
<div class="a" style="left:1212px;top:345px;width:32px;height:32px;background:#303030;border-right:1px solid #262626;border-bottom:1px solid #262626"></div>
<div class="a" style="left:1220px;top:353px;width:16px;height:16px;background:linear-gradient(#0a6ad0 0,#7ad0ff 40%,#101010 50%,#f0a020 60%,#c07010 100%);box-shadow:0 1px 1px #000"></div>
<div class="a" style="left:1244px;top:345px;width:32px;height:32px;background:#303030;border-right:1px solid #262626;border-bottom:1px solid #262626"></div>
<div class="a" style="left:1252px;top:353px;width:16px;height:16px;background:radial-gradient(circle,#999 0,#ddd 40%,#fff 60%,#aaa 100%)"></div>
<div class="a" style="left:1276px;top:345px;width:32px;height:32px;background:#303030;border-right:1px solid #262626;border-bottom:1px solid #262626"></div>
<div class="a" style="left:1284px;top:353px;width:16px;height:16px;background:linear-gradient(#f0a0a0 0,#b06090 25%,#4a6ab0 50%,#a060b0 75%,#902040 100%);box-shadow:0 4px 3px #000"></div>
<div class="a" style="left:1308px;top:345px;width:32px;height:32px;background:#303030;border-right:1px solid #262626;border-bottom:1px solid #262626"></div>
<div class="a" style="left:1316px;top:353px;width:16px;height:16px;background:#555;box-shadow:0 1px 0 #111"></div>
<div class="a" style="left:1052px;top:377px;width:32px;height:32px;background:#303030;border-right:1px solid #262626;border-bottom:1px solid #262626"></div>
<div class="a" style="left:1060px;top:385px;width:16px;height:16px;background:#2c2c2c;border:1px solid #181818;border-radius:2px"></div>
<div class="a" style="left:1084px;top:377px;width:32px;height:32px;background:#303030;border-right:1px solid #262626;border-bottom:1px solid #262626"></div>
<div class="a" style="left:1092px;top:385px;width:16px;height:16px;background:#5a5a5a;border:1px solid #1a1a1a;border-radius:2px"></div>
<div class="a" style="left:1118px;top:315px;width:26px;height:27px;border:2px solid #e6e2b8;border-radius:5px"></div>
<div class="a" style="left:1121px;top:318px;width:20px;height:21px;border:1.5px solid #e6e2b8;border-radius:3px"></div>
<svg style="left:1052px;top:313px" width="32" height="32"><path d="M5 5L26 26" stroke="#e01010" stroke-width="2.2"/></svg>
<!-- styles bottom bar -->
<div class="a" style="left:1051px;top:492px;width:314px;height:18px;background:#333;box-shadow:inset 0 1px 0 #3f3f3f"></div>
<svg style="left:1250px;top:490px" width="100" height="20" fill="none" stroke="#8e8e8e">
<circle cx="20.6" cy="11.2" r="5" stroke-width="1.5"/><path d="M17.2 7.8L24 14.6" stroke-width="1.6"/>
<path d="M47 6h10v10h-6v-4h-4Z" fill="#8e8e8e" stroke="none"/><path d="M47 12.5h3.5v3.5Z" fill="#8e8e8e" stroke="none"/>
<path d="M75 9.3h11" stroke-width="1.6"/><path d="M79 9V6.8h3.5V9" stroke-width="1.1"/><path d="M76.5 10.5v7h8.5v-7" stroke-width="1.1"/><path d="M78.8 11v5.5M80.8 11v5.5M82.8 11v5.5" stroke-width="0.9"/>
</svg>
<svg style="left:1354px;top:500px" width="10" height="10" fill="#141414"><circle cx="8.5" cy="1.5" r="0.7"/><circle cx="8.5" cy="4" r="0.7"/><circle cx="6" cy="4" r="0.7"/><circle cx="8.5" cy="6.5" r="0.7"/><circle cx="6" cy="6.5" r="0.7"/><circle cx="3.5" cy="6.5" r="0.7"/><circle cx="8.5" cy="9" r="0.7"/><circle cx="6" cy="9" r="0.7"/><circle cx="3.5" cy="9" r="0.7"/><circle cx="1" cy="9" r="0.7"/></svg>
<div class="a" style="left:1051px;top:510px;width:314px;height:3px;background:#1e1e1e"></div>

<!-- LAYERS PANEL -->
<div class="a" style="left:1051px;top:513px;width:314px;height:17px;background:#232323;box-shadow:inset 0 1px 0 #2c2c2c"></div>
<div class="a" style="left:1091px;top:513px;width:52px;height:17px;background:#262626;border-right:1px solid #1e1e1e;box-shadow:inset 0 1px 0 #2e2e2e"></div>
<div class="a" style="left:1143px;top:513px;width:57px;height:17px;background:#262626;border-right:1px solid #1e1e1e;box-shadow:inset 0 1px 0 #2e2e2e"></div>
<div class="a" style="left:1051px;top:513px;width:40px;height:18px;background:#353535"></div>
<div class="t" style="left:1059px;top:516px;font-weight:bold;font-size:10px;color:#d8dce4">Слои</div>
<div class="t" style="left:1098px;top:516px;font-weight:bold;font-size:10px;color:#9a9a9a">Каналы</div>
<div class="t" style="left:1150px;top:516px;font-weight:bold;font-size:10px;color:#9a9a9a">Контуры</div>
<svg style="left:1346px;top:517px" width="16" height="9" fill="#c0c0c0"><path d="M0 2.5h5L2.5 5.5Z"/><rect x="6" y="0" width="9" height="1.3"/><rect x="6" y="2.6" width="9" height="1.3"/><rect x="6" y="5.2" width="9" height="1.3"/><rect x="6" y="7.8" width="9" height="1.2"/></svg>
<div class="a" style="left:1051px;top:530px;width:314px;height:85px;background:#353535"></div>
<div class="a" style="left:1051px;top:558px;width:314px;height:1px;background:#262626;box-shadow:0 1px 0 #3c3c3c"></div>
<div class="a" style="left:1051px;top:586px;width:314px;height:1px;background:#262626;box-shadow:0 1px 0 #3c3c3c"></div>
<!-- filter -->
<div class="dd" style="left:1057px;top:536px;width:94px;height:17px"></div>
<svg style="left:1063px;top:539px" width="12" height="12"><circle cx="7" cy="4.5" r="3.3" fill="none" stroke="#d0d0d0" stroke-width="1.4"/><path d="M4.8 6.8L1.5 10.2" stroke="#d0d0d0" stroke-width="1.8" stroke-linecap="round"/></svg>
<div class="t" style="left:1078px;top:539px;color:#d0d0d0">Вид</div>
<svg style="left:1139px;top:540px" width="6" height="10"><path d="M0 4L3 0.5L6 4ZM0 6L3 9.5L6 6Z" fill="#c8c8c8"/></svg>
<svg style="left:1195px;top:536px" width="120" height="17" fill="none" stroke="#c4c4c4">
<rect x="1.5" y="2.5" width="13" height="11" stroke-width="1"/><path d="M3 12l3.5-4 2 2 2-2.5 2.5 4.5Z" fill="#c4c4c4" stroke="none"/><circle cx="11" cy="5.5" r="1.2" fill="#c4c4c4" stroke="none"/>
<circle cx="31" cy="6.8" r="4.5" fill="none" stroke="#c8c8c8" stroke-width="1.3"/><path d="M34.2 3.6A4.5 4.5 0 0 0 27.8 10Z" fill="#c8c8c8" stroke="none"/>
<path d="M50.5 2.5h11v3M56 2.5v11.5M53.5 14h5M50.5 2.5v3" stroke-width="1.6"/>
<rect x="74.5" y="3.5" width="10" height="10" stroke-width="1.1"/><g fill="#c4c4c4" stroke="none"><rect x="73" y="2" width="3" height="3"/><rect x="83" y="2" width="3" height="3"/><rect x="73" y="12" width="3" height="3"/><rect x="83" y="12" width="3" height="3"/></g>
<path d="M103.5 2.5h5l2 2v8h-7Z" stroke-width="1.1"/><rect x="98" y="8.5" width="6" height="6" fill="#c4c4c4" stroke="none"/>
</svg>
<div class="a" style="left:1352px;top:536px;width:10px;height:17px;background:linear-gradient(#7a7a7a,#404040 50%,#2a2a2a 50%,#262626);border:1px solid #1e1e1e;border-radius:1px"></div>
<!-- blend -->
<div class="dd" style="left:1057px;top:564px;width:158px;height:17px"></div>
<div class="t" style="left:1064px;top:567px;color:#d0d0d0">Обычные</div>
<svg style="left:1205px;top:568px" width="6" height="10"><path d="M0 4L3 0.5L6 4ZM0 6L3 9.5L6 6Z" fill="#c8c8c8"/></svg>
<div class="t" style="left:1223px;top:567px;color:#d0d0d0">Непрозрачность:</div>
<div class="a" style="left:1307px;top:563px;width:54px;height:18px;background:#3a3a3a;border:1px solid #1c1c1c;border-radius:2px"></div>
<div class="a" style="left:1308px;top:564px;width:34px;height:16px;background:#1e1e1e"></div>
<div class="t" style="left:1311px;top:567px;color:#e0e0e0">100%</div>
<svg style="left:1348px;top:570px" width="6" height="4"><path d="M0 0h6L3 3.5Z" fill="#c8c8c8"/></svg>
<!-- lock -->
<div class="t" style="left:1058px;top:595px;color:#d0d0d0">Закрепить:</div>
<div class="a" style="left:1119px;top:594px;width:11px;height:11px;background:repeating-conic-gradient(#8a8a8a 0 25%,#555 0 50%) 0 0/5.5px 5.5px"></div>
<svg style="left:1137px;top:591px" width="60" height="16" fill="#7a7a7a">
<path d="M16.5 1.5L8.5 10.5" stroke="#7a7a7a" stroke-width="1.6" stroke-linecap="round"/><path d="M8.5 9c-2.5 0-4 1-5 2.5c-1 1-2 1.5-3 1.5c3 1.5 7 1 8.5-2.5Z"/>
<g fill="#d0d0d0"><path d="M30.5 2.5v11M25 8h11" stroke="#d0d0d0" stroke-width="1.2"/><path d="M30.5 1.5l-2.3 2.5h4.6ZM30.5 14.5l-2.3-2.5h4.6ZM24 8l2.5-2.3v4.6ZM37 8l-2.5-2.3v4.6Z"/>
<path d="M50.5 3.5c0-3 5-3 5 0v3h-1.5v-3c0-1.3-2-1.3-2 0v3h-1.5Z"/><rect x="49" y="7" width="8" height="7"/></g>
<rect x="52.3" y="9" width="1.4" height="3" fill="#333"/>
</svg>
<div class="t" style="left:1262px;top:595px;color:#d0d0d0">Заливка:</div>
<div class="a" style="left:1307px;top:591px;width:54px;height:18px;background:#3a3a3a;border:1px solid #1c1c1c;border-radius:2px"></div>
<div class="a" style="left:1308px;top:592px;width:34px;height:16px;background:#1e1e1e"></div>
<div class="t" style="left:1311px;top:595px;color:#e0e0e0">100%</div>
<svg style="left:1348px;top:598px" width="6" height="4"><path d="M0 0h6L3 3.5Z" fill="#c8c8c8"/></svg>
<!-- layer list -->
<div class="a" style="left:1051px;top:615px;width:314px;height:93px;background:#333"></div>
<div class="a" style="left:1082px;top:615px;width:268px;height:39px;background:#4b5265"></div>
<div class="a" style="left:1082px;top:615px;width:1px;height:93px;background:#2a2a2a"></div>
<div class="a" style="left:1051px;top:654px;width:299px;height:1px;background:#262626"></div>
<div class="a" style="left:1051px;top:693px;width:299px;height:1px;background:#262626"></div>
<svg style="left:1059px;top:628px" width="16" height="12"><path d="M1 6C3 2.5 5.5 1.5 8 1.5S13 2.5 15 6C13 9.5 10.5 10.5 8 10.5S3 9.5 1 6Z" fill="#d0d0d0"/><circle cx="8" cy="6" r="2.6" fill="#2a2a2a"/><circle cx="7" cy="5" r="0.9" fill="#999"/></svg>
<svg style="left:1084px;top:617px" width="37" height="37" fill="none" stroke="#f0f0f0" stroke-width="1.3">
<path d="M0.7 8V0.7H8M29 0.7H36.3V8M36.3 29V36.3H29M8 36.3H0.7V29"/>
<text x="18" y="25" font-family="Liberation Serif" font-weight="bold" font-size="19" text-anchor="middle" fill="#cfcfcf" stroke="none">T</text>
</svg>
<div class="t" style="left:1128px;top:631px;color:#d4d4d4;white-space:pre;word-spacing:1px">текст  текст  текст  текст  текст текст тек...</div>
<div class="a" style="left:1061px;top:668px;width:12px;height:12px;border:1px solid #1e1e1e;background:#2c2c2c"></div>
<div class="a" style="left:1086px;top:658px;width:32px;height:32px;border:1.5px solid #000;background:repeating-conic-gradient(#cfcfcf 0 25%,#fff 0 50%) 0 0/8px 8px"></div>
<div class="a" style="left:1103px;top:675px;width:16px;height:16px;background:#333;border-left:1.5px solid #000;border-top:1.5px solid #000"></div>
<svg style="left:1104px;top:676px" width="14" height="14" fill="#333" stroke="#d8d8d8" stroke-width="1"><rect x="3" y="3" width="8" height="8" fill="none"/><rect x="1.5" y="1.5" width="3" height="3"/><rect x="9.5" y="1.5" width="3" height="3"/><rect x="1.5" y="9.5" width="3" height="3"/><rect x="9.5" y="9.5" width="3" height="3"/></svg>
<div class="t" style="left:1128px;top:670px;color:#d4d4d4">Эллипс 1</div>
<div class="a" style="left:1086px;top:697px;width:32px;height:11px;background:linear-gradient(100deg,#2a0a12,#a04560 60%,#c05a7a);border:1px solid #111;border-bottom:none"></div>
<!-- layers scrollbar -->
<div class="a" style="left:1350px;top:615px;width:15px;height:93px;background:#2e2e2e"></div>
<svg style="left:1353px;top:620px" width="9" height="6"><path d="M0.5 5L4.5 1L8.5 5Z" fill="#c8c8c8"/></svg>
<div class="a" style="left:1352px;top:634px;width:11px;height:41px;background:#505050;border-radius:3px"></div>
<svg style="left:1353px;top:697px" width="9" height="6"><path d="M0.5 1L4.5 5L8.5 1Z" fill="#c8c8c8"/></svg>
<!-- layers bottom -->
<div class="a" style="left:1051px;top:707px;width:314px;height:1px;background:#222"></div>
<div class="a" style="left:1051px;top:708px;width:314px;height:19px;background:#333;box-shadow:inset 0 1px 0 #3d3d3d"></div>
<svg style="left:1150px;top:705px" width="200" height="22" fill="#b4b4b4" stroke="none">
<path d="M17.5 10.8h-3a3.2 3.2 0 0 0 0 6.4h3M20.5 10.8h3a3.2 3.2 0 0 1 0 6.4h-3M16 14h6" fill="none" stroke="#8e8e8e" stroke-width="1.7"/>
<text x="40" y="17.8" font-family="Liberation Serif" font-style="italic" font-size="14.5" fill="#b4b4b4">fx</text><path d="M54 17.5h3l-1.5 1.6Z"/>
<rect x="67" y="8.6" width="13" height="10.2"/><circle cx="73.5" cy="14" r="2.6" fill="#333"/>
<circle cx="99.6" cy="13.5" r="4.9" fill="none" stroke="#b4b4b4" stroke-width="1.3"/><path d="M103.1 10A4.9 4.9 0 0 0 96.1 17Z"/><path d="M106.5 17.5h3l-1.5 1.6Z"/>
<path d="M121 8.5h4.5l1.5 1.5h6v8.5h-12Z"/>
<path d="M149 8h10v10h-6v-4h-4Z"/><path d="M149 14.5h3.5v3.5Z"/>
<path d="M174.7 10.3h11.3" stroke="#b4b4b4" stroke-width="1.5"/><path d="M178.5 10V8h4v2" fill="none" stroke="#b4b4b4" stroke-width="1.1"/><path d="M176.3 11.5v7.3h8.4v-7.3" fill="none" stroke="#b4b4b4" stroke-width="1.1"/><path d="M178.6 12v6M180.5 12v6M182.4 12v6" stroke="#b4b4b4" stroke-width="0.9"/>
</svg>

</body></html>
